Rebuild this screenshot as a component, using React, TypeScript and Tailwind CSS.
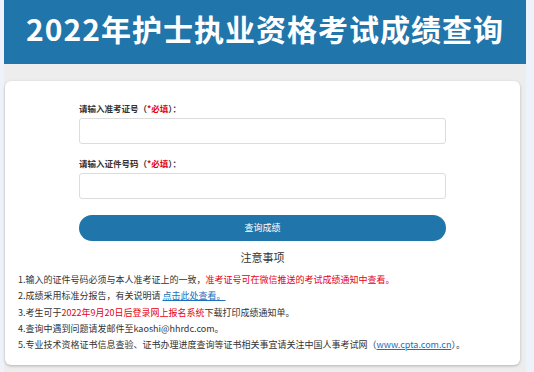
import React from "react";

const font = { fontFamily: '"Microsoft YaHei", "Noto Sans CJK SC", "Noto Sans", sans-serif' };

function Field({ label }: { label: string }) {
  return (
    <div className="flex flex-col">
      <label className="h-[12px] text-[8.5px] leading-[12px] font-bold text-[#333]">
        {label}（<span className="text-[#e60012]">*必填</span>）：
      </label>
      <input className="mt-[4px] h-[26px] w-full rounded-[3px] border border-[#dcdcdc] bg-white outline-none" />
    </div>
  );
}

export default function App() {
  return (
    <div className="flex h-[372px] w-[534px] bg-[#eef3fb] pl-[4px] pr-[8px]" style={font}>
      <div className="flex flex-1 flex-col bg-[#ededed]">
        <header className="h-[64px] bg-[#2075aa] pt-[8px] text-center">
          <h1 className="text-[30px] font-bold leading-[40px] tracking-[1px] text-white">
            2022年护士执业资格考试成绩查询
          </h1>
        </header>

        <main className="ml-[1px] mr-[6px] mt-[17px] h-[284px] rounded-[6px] bg-white shadow-[0_1px_3px_rgba(0,0,0,0.25)]">
          <div className="mx-auto flex w-[367px] flex-col pt-[21px]">
            <Field label="请输入准考证号" />
            <div className="mt-[13px]">
              <Field label="请输入证件号码" />
            </div>
            <button className="mt-[16px] h-[26px] w-full rounded-full bg-[#2075aa] text-[9px] text-white">
              查询成绩
            </button>
          </div>

          <h2 className="mt-[8px] text-center text-[11px] leading-[16px] text-[#333]">注意事项</h2>
          <ul className="mt-[7px] px-[13px] text-[9px] leading-[16.25px] text-[#333]">
            <li>
              1.输入的证件号码必须与本人准考证上的一致，
              <span className="text-[#e60012]">准考证号可在微信推送的考试成绩通知中查看。</span>
            </li>
            <li>
              2.成绩采用标准分报告，有关说明请{" "}
              <a className="text-[#1a6fc0] underline">点击此处查看。</a>
            </li>
            <li>
              3.考生可于<span className="text-[#e60012]">2022年9月20日后登录网上报名系统</span>下载打印成绩通知单。
            </li>
            <li>4.查询中遇到问题请发邮件至kaoshi@hhrdc.com。</li>
            <li>
              5.专业技术资格证书信息查验、证书办理进度查询等证书相关事宜请关注中国人事考试网（
              <a className="text-[#1a6fc0] underline">www.cpta.com.cn</a>）。
            </li>
          </ul>
        </main>
      </div>
    </div>
  );
}
